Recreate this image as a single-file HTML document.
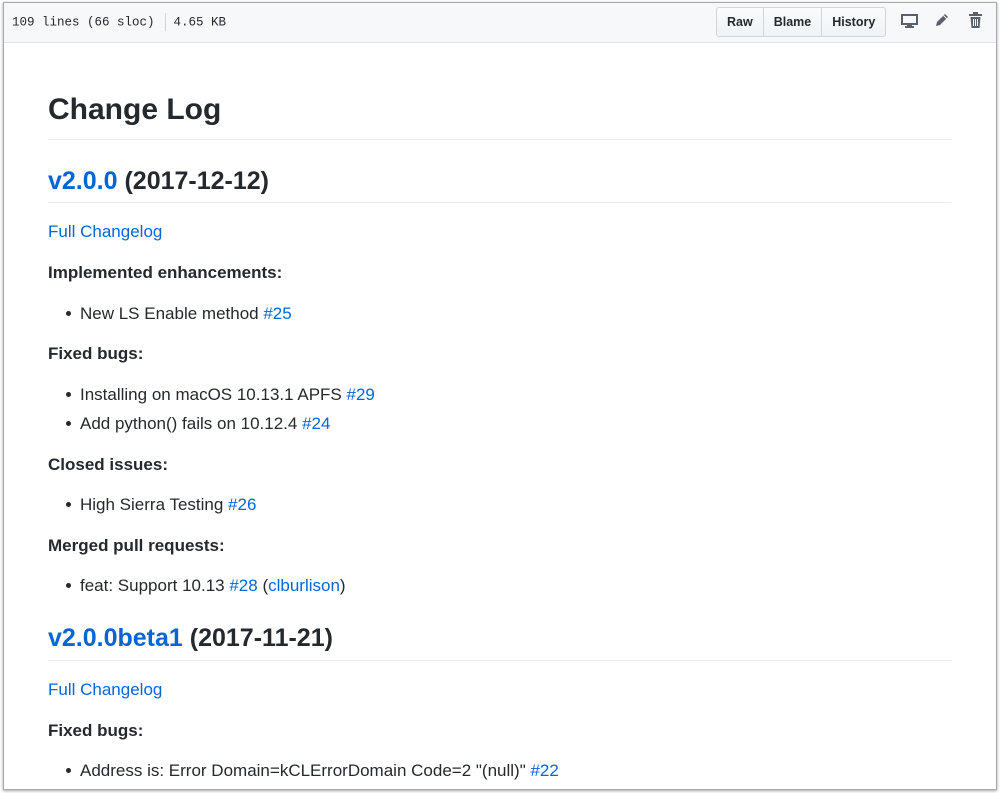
<!DOCTYPE html>
<html><head><meta charset="utf-8"><style>
body{margin:0;width:1000px;height:793px;background:#fff;overflow:hidden;font-family:"Liberation Sans",Helvetica,Arial,sans-serif;color:#24292e;position:relative}
.frame{position:absolute;left:3px;top:2px;width:992px;height:786px;border:1px solid #a8a8a8;box-shadow:0 1px 3px rgba(0,0,0,.35);background:#fff;overflow:hidden}
.hdr{position:absolute;left:0;top:0;right:0;height:39px;background:#f6f8fa;border-bottom:1px solid #e1e4e8}
.meta{position:absolute;left:8px;top:10px;font-family:"Liberation Mono",monospace;font-size:12.5px;color:#24292e}
.sep{display:inline-block;width:1px;height:18px;background:#d1d5da;vertical-align:middle;margin:0 8px 0 10px}
.btns{position:absolute;left:712px;top:4px;height:28px;border:1px solid #d1d5da;border-radius:3px;display:flex;background:linear-gradient(#fafbfc,#eff3f6);font-size:12.5px;font-weight:bold}
.btns div{padding:0 10px;line-height:28px;border-right:1px solid #d1d5da}
.btns div:last-child{border-right:0}
.t{position:absolute;left:44px;white-space:nowrap}
a{color:#0366d6;text-decoration:none}
.h1{font-size:30px;font-weight:bold;line-height:40px}
.h2{font-size:25px;font-weight:bold;line-height:30px}
.p{font-size:17px;line-height:24px}
.b{font-weight:bold}
.li{left:76px}
.li:before{content:"";position:absolute;left:-14px;top:9px;width:5px;height:5px;border-radius:50%;background:#24292e}
.hr{position:absolute;left:44px;width:903px;height:1px;background:#eaecef}
</style></head><body>
<div class="frame">
<div class="hdr">
<div class="meta">109 lines (66 sloc)<span class="sep"></span>4.65 KB</div>
<div class="btns"><div>Raw</div><div>Blame</div><div>History</div></div>
<svg style="position:absolute;left:897px;top:11px" width="17" height="14" viewBox="0 0 17 14"><rect x="1" y="1" width="15" height="9" fill="none" stroke="#586069" stroke-width="2"/><rect x="6" y="10" width="5" height="2" fill="#586069"/><rect x="4" y="12" width="9" height="2" fill="#586069"/></svg>
<svg style="position:absolute;left:930px;top:10px" width="15" height="15" viewBox="0 0 15 15"><path d="M2 13 L3 9 L11 1 L14 4 L6 12 Z" fill="#586069"/><path d="M9.5 2.5 L12.5 5.5" stroke="#f6f8fa" stroke-width="1"/></svg>
<svg style="position:absolute;left:965px;top:9px" width="13" height="16" viewBox="0 0 13 16"><rect x="0" y="2" width="13" height="2" fill="#586069"/><rect x="4" y="0" width="5" height="2" fill="#586069"/><path d="M1.5 5 H11.5 L10.5 16 H2.5 Z" fill="#586069"/><path d="M4.5 7 V14 M6.5 7 V14 M8.5 7 V14" stroke="#f6f8fa" stroke-width="1"/></svg>
</div>
<div class="t h1" style="top:87px">Change Log</div>
<div class="hr" style="top:136px"></div>
<div class="t h2" style="top:163px"><a>v2.0.0</a> (2017-12-12)</div>
<div class="hr" style="top:199px"></div>
<div class="t p" style="top:217px"><a>Full Changelog</a></div>
<div class="t p b" style="top:258px">Implemented enhancements:</div>
<div class="t p li" style="top:299px">New LS Enable method <a>#25</a></div>
<div class="t p b" style="top:339px">Fixed bugs:</div>
<div class="t p li" style="top:380px">Installing on macOS 10.13.1 APFS <a>#29</a></div>
<div class="t p li" style="top:409px">Add python() fails on 10.12.4 <a>#24</a></div>
<div class="t p b" style="top:450px">Closed issues:</div>
<div class="t p li" style="top:490px">High Sierra Testing <a>#26</a></div>
<div class="t p b" style="top:531px">Merged pull requests:</div>
<div class="t p li" style="top:571px">feat: Support 10.13 <a>#28</a> (<a>clburlison</a>)</div>
<div class="t h2" style="top:620px"><a>v2.0.0beta1</a> (2017-11-21)</div>
<div class="hr" style="top:657px"></div>
<div class="t p" style="top:675px"><a>Full Changelog</a></div>
<div class="t p b" style="top:716px">Fixed bugs:</div>
<div class="t p li" style="top:756px">Address is: Error Domain=kCLErrorDomain Code=2 "(null)" <a>#22</a></div>
</div>
</body></html>
